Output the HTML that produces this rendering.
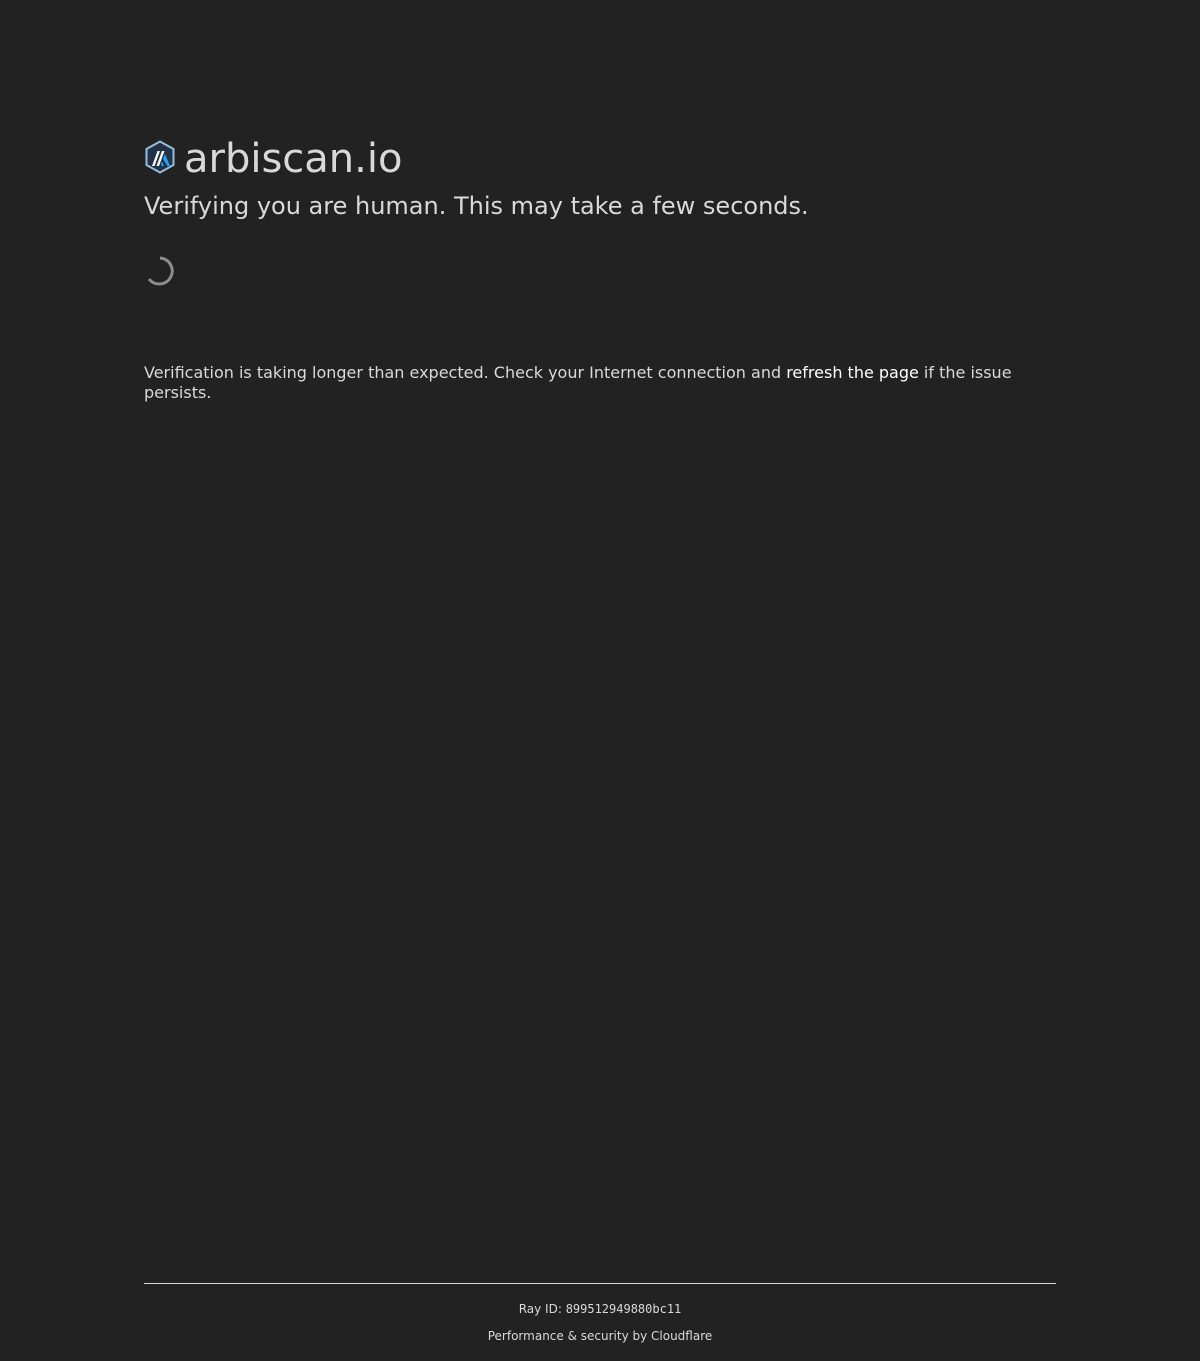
<!DOCTYPE html>
<html><head><meta charset="utf-8">
<style>
html,body{margin:0;padding:0;background:#222;}
body{width:1200px;height:1361px;position:relative;font-family:"DejaVu Sans","Liberation Sans",sans-serif;color:#d9d9d9;overflow:hidden;}
.abs{position:absolute;white-space:nowrap;}
h1{margin:0;font-weight:400;font-size:40px;line-height:48px;}
</style></head><body>
<svg class="abs" style="left:144px;top:140px" width="32" height="34" viewBox="0 0 32 34">
  <polygon points="16,1.5 29.5,9 29.5,25 16,32.5 2.5,25 2.5,9" fill="#213147" stroke="#96bedc" stroke-width="2"/>
  <path d="M8 26 L13.5 11 L16 11 L10.5 26Z" fill="#fff"/>
  <path d="M12.5 26 L18 11 L20.5 11 L15 26Z" fill="#fff"/>
  <path d="M19 19 L21 14 L26 26 L23.5 26Z" fill="#28a0f0"/>
  <path d="M17 24 L18 21.5 L20 26 L17.8 26Z" fill="#28a0f0"/>
</svg>
<h1 class="abs" style="left:184px;top:135px">arbiscan.io</h1>
<div class="abs" style="left:144px;top:192px;font-size:24px;line-height:29px">Verifying you are human. This may take a few seconds.</div>
<svg class="abs" style="left:144px;top:255px" width="32" height="32" viewBox="0 0 32 32">
  <path d="M16 3 A13 13 0 1 1 5 24" fill="none" stroke="#8e8e8e" stroke-width="3"/>
</svg>
<div class="abs" style="left:144px;top:363px;font-size:16px;line-height:19.5px;white-space:normal;width:912px">Verification is taking longer than expected. Check your Internet connection and <span style="color:#fff">refresh the page</span> if the issue persists.</div>
<div class="abs" style="left:144px;top:1283px;width:912px;height:1px;background:#d9d9d9"></div>
<div class="abs" style="left:0;width:1200px;text-align:center;top:1301px;font-size:12px;line-height:16px">Ray ID: <span style="font-family:'DejaVu Sans Mono','Liberation Mono',monospace">899512949880bc11</span></div>
<div class="abs" style="left:0;width:1200px;text-align:center;top:1328px;font-size:12px;line-height:16px">Performance &amp; security by Cloudflare</div>
</body></html>
